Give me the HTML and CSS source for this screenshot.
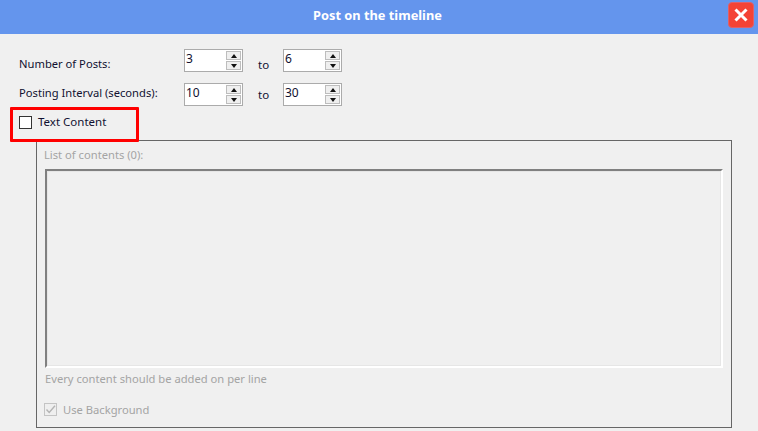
FILE: index.html
```html
<!DOCTYPE html>
<html lang="en">
<head>
<meta charset="utf-8">
<title>Post on the timeline</title>
<link rel="stylesheet" href="styles.css">
</head>
<body>
<header class="titlebar">
  <h1 class="title">Post on the timeline</h1>
  <button class="close" aria-label="Close">
    <svg width="14" height="14" viewBox="0 0 14 14"><path d="M1.5 1.5 L12.5 12.5 M12.5 1.5 L1.5 12.5" stroke="#fff" stroke-width="3" fill="none"/></svg>
  </button>
</header>
<main class="content">
  <div class="row row-first">
    <span class="label">Number of Posts:</span>
    <div class="spin"><span class="val">3</span><div class="arrows"><span class="btn"><i class="up"></i></span><span class="btn"><i class="down"></i></span></div></div>
    <span class="to">to</span>
    <div class="spin"><span class="val">6</span><div class="arrows"><span class="btn"><i class="up"></i></span><span class="btn"><i class="down"></i></span></div></div>
  </div>
  <div class="row row-second">
    <span class="label">Posting Interval (seconds):</span>
    <div class="spin"><span class="val">10</span><div class="arrows"><span class="btn"><i class="up"></i></span><span class="btn"><i class="down"></i></span></div></div>
    <span class="to">to</span>
    <div class="spin"><span class="val">30</span><div class="arrows"><span class="btn"><i class="up"></i></span><span class="btn"><i class="down"></i></span></div></div>
  </div>
  <div class="check-row">
    <span class="highlight"></span>
    <span class="box"></span>
    <span class="check-text">Text Content</span>
  </div>
  <section class="group">
    <div class="list-label">List of contents (0):</div>
    <div class="textarea"></div>
    <div class="hint">Every content should be added on per line</div>
    <div class="use-bg">
      <span class="box box-off">
        <svg width="11" height="11" viewBox="0 0 11 11"><path d="M1.5 5.5 L4.2 8.5 L10 1.8" stroke="#b4b4b4" stroke-width="1.4" fill="none"/></svg>
      </span>
      <span>Use Background</span>
    </div>
  </section>
</main>
</body>
</html>
```
FILE: styles.css
```css
* { box-sizing: border-box; }
html, body { margin: 0; height: 100%; overflow: hidden; }
body {
  background: #f0f0f0;
  font-family: "Noto Sans", "Open Sans", sans-serif;
  font-size: 11.2px;
  color: #101030;
}
.titlebar {
  height: 34px;
  padding-bottom: 4px;
  background: #6495ed;
  display: flex;
  align-items: center;
  justify-content: center;
  position: relative;
}
.title {
  margin: 0 3px 0 0;
  font-size: 12.8px;
  font-weight: 700;
  color: #fff;
}
.close {
  position: absolute;
  top: 2px;
  left: 728px;
  width: 26px;
  height: 26px;
  padding: 0;
  border: 1px solid #e0606a;
  border-radius: 4px;
  background: #f44336;
  display: flex;
  align-items: center;
  justify-content: center;
}
.content { padding: 15px 0 0 19px; }
.row { display: flex; align-items: flex-start; height: 23px; }
.row-second { margin-top: 11px; }
.label { width: 165px; padding-top: 7px; line-height: 16px; }
.row-second .label { padding-top: 2px; }
.to { width: 40px; padding: 8px 0 0 15px; line-height: 16px; font-size: 11.5px; }
.row-second .to { padding-top: 4px; }
.spin {
  width: 59px;
  height: 23px;
  border: 1px solid #ababab;
  background: #fff;
  display: flex;
  justify-content: space-between;
}
.val { padding-left: 1px; line-height: 17px; font-size: 12px; }
.arrows { width: 15px; margin: 1px 1px 1px 0; display: flex; flex-direction: column; gap: 1px; }
.btn {
  flex: 1;
  background: #efefef;
  border: 1px solid #bdbdbd;
  display: flex;
  align-items: center;
  justify-content: center;
}
.up, .down { width: 0; height: 0; border-left: 3.5px solid transparent; border-right: 3.5px solid transparent; }
.up { border-bottom: 4px solid #111; }
.down { border-top: 4px solid #111; }
.check-row {
  position: relative;
  display: flex;
  align-items: center;
  gap: 6px;
  height: 16px;
  margin-top: 8px;
  font-size: 11.5px;
}
.check-text { padding-bottom: 2px; }
.highlight {
  position: absolute;
  left: -9px;
  top: -7px;
  width: 129px;
  height: 35px;
  border: 3px solid #f00;
  border-radius: 1px;
  z-index: 1;
}
.box {
  width: 13px;
  height: 13px;
  border: 1px solid #333;
  background: #fff;
  flex: none;
}
.box-off {
  border-color: #c4c4c4;
  background: #efefef;
  display: flex;
  align-items: center;
  justify-content: center;
}
.group {
  width: 696px;
  height: 288px;
  margin: 10px 0 0 17px;
  border: 1px solid #666;
  padding: 6px 0 0 7px;
  color: #a4a4a4;
}
.list-label { line-height: 16px; }
.textarea {
  width: 678px;
  height: 199px;
  margin: 6px 0 0 1px;
  border: 2px solid;
  border-color: #808080 #fff #fff #808080;
  outline: 1px solid #e6e6e6;
  outline-offset: -3px;
}
.hint { margin: 3px 0 0 1px; line-height: 16px; }
.use-bg { display: flex; align-items: center; gap: 6px; margin-top: 14px; height: 16px; }
```
